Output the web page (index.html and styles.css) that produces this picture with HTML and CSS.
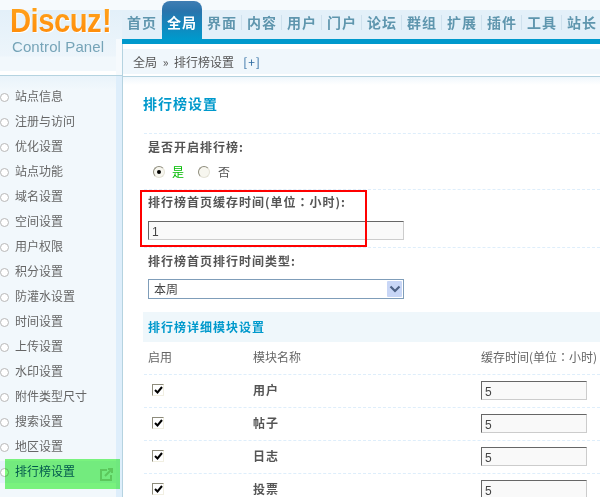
FILE: index.html
```html
<!DOCTYPE html>
<html lang="zh">
<head>
<meta charset="utf-8">
<title>排行榜设置</title>
<link rel="stylesheet" href="styles.css">
</head>
<body>
<div class="page">
  <aside class="side">
    <div class="logo">
      <div class="logo-mark">Discuz<span class="logo-bang">!</span></div>
      <div class="logo-sub">Control Panel</div>
    </div>
    <ul class="menu">
      <li class="menu-item">站点信息</li>
      <li class="menu-item">注册与访问</li>
      <li class="menu-item">优化设置</li>
      <li class="menu-item">站点功能</li>
      <li class="menu-item">域名设置</li>
      <li class="menu-item">空间设置</li>
      <li class="menu-item">用户权限</li>
      <li class="menu-item">积分设置</li>
      <li class="menu-item">防灌水设置</li>
      <li class="menu-item">时间设置</li>
      <li class="menu-item">上传设置</li>
      <li class="menu-item">水印设置</li>
      <li class="menu-item">附件类型尺寸</li>
      <li class="menu-item">搜索设置</li>
      <li class="menu-item">地区设置</li>
      <li class="menu-item is-active">排行榜设置
        <svg class="open-icon" width="13" height="13" viewBox="0 0 13 13" fill="none" stroke="#5cc85c" stroke-width="2"><path d="M7 2H1v10h10V7"/><path d="M5 8l7-7M8 1h4v4"/></svg>
        <span class="active-glow"></span>
      </li>
    </ul>
  </aside>
  <main class="main">
    <nav class="tabs">
      <a class="tab">首页</a><a class="tab is-active">全局</a><a class="tab">界面</a><a class="tab">内容</a><a class="tab">用户</a><a class="tab">门户</a><a class="tab">论坛</a><a class="tab">群组</a><a class="tab">扩展</a><a class="tab">插件</a><a class="tab">工具</a><a class="tab">站长</a>
    </nav>
    <div class="crumbs">全局 » 排行榜设置<span class="crumb-more">[+]</span></div>
    <div class="crumb-fade"></div>
    <section class="content">
      <h1 class="title">排行榜设置</h1>
      <div class="field field-a">
        <div class="label">是否开启排行榜:</div>
        <div class="radios">
          <span class="radio is-on"></span><span class="radio-text is-yes">是</span>
          <span class="radio"></span><span class="radio-text">否</span>
        </div>
      </div>
      <div class="field field-b">
        <div class="label">排行榜首页缓存时间(单位<span class="colon" lang="zh-TW">：</span>小时):</div>
        <input class="text text-wide" value="1">
        <span class="redbox"></span>
      </div>
      <div class="field field-c">
        <div class="label">排行榜首页排行时间类型:</div>
        <div class="select">
          <span class="select-value">本周</span>
          <span class="select-arrow"><svg width="12" height="8" viewBox="0 0 12 8" fill="none" stroke="#4d6185" stroke-width="2.2"><path d="M1.5 1.500L6 6l4.500-4.500"/></svg></span>
        </div>
      </div>
      <h2 class="band">排行榜详细模块设置</h2>
      <div class="grid-row grid-head">
        <span>启用</span><span>模块名称</span><span class="nowrap">缓存时间(单位<span class="colon" lang="zh-TW">：</span>小时)</span>
      </div>
      <div class="grid-row">
        <span class="check"><svg width="9" height="8" viewBox="0 0 9 8" fill="none" stroke="#000" stroke-width="2"><path d="M1 4l2.500 2.500L8 1"/></svg></span>
        <b class="name">用户</b><input class="text text-small" value="5">
      </div>
      <div class="grid-row">
        <span class="check"><svg width="9" height="8" viewBox="0 0 9 8" fill="none" stroke="#000" stroke-width="2"><path d="M1 4l2.500 2.500L8 1"/></svg></span>
        <b class="name">帖子</b><input class="text text-small" value="5">
      </div>
      <div class="grid-row">
        <span class="check"><svg width="9" height="8" viewBox="0 0 9 8" fill="none" stroke="#000" stroke-width="2"><path d="M1 4l2.500 2.500L8 1"/></svg></span>
        <b class="name">日志</b><input class="text text-small" value="5">
      </div>
      <div class="grid-row">
        <span class="check"><svg width="9" height="8" viewBox="0 0 9 8" fill="none" stroke="#000" stroke-width="2"><path d="M1 4l2.500 2.500L8 1"/></svg></span>
        <b class="name">投票</b><input class="text text-small" value="5">
      </div>
    </section>
  </main>
</div>
</body>
</html>
```
FILE: styles.css
```css
* { box-sizing: border-box; }
html, body { margin: 0; padding: 0; background: #fff; }
body {
  width: 600px; height: 497px; overflow: hidden;
  font: 12px/14px "Noto Sans CJK SC", "Liberation Sans", sans-serif;
  color: #555;
}
.page { display: flex; width: 600px; height: 497px; overflow: hidden; }
.colon { font-family: "Noto Sans CJK TC", "Noto Sans CJK SC", sans-serif; }

/* sidebar */
.side { flex: 0 0 122px; width: 122px; min-width: 0; display: flex; flex-direction: column; height: 497px; background: #f2f8fc; }
.logo {
  height: 76px; padding: 3px 0 0 10px; overflow: hidden;
  border-bottom: 1px solid #b5d3e0;
  background:
    linear-gradient(90deg, transparent 116px, #f6fafd 116px) 0 39px no-repeat,
    linear-gradient(#f6fafd 0, #f6fafd 10px, #e3f0f9 10px, #edf5fb 56px, #f2f8fc 57px, #f2f8fc 71px, #fff 71px);
}
.logo-mark {
  display: flex; width: max-content; height: 34px;
  font: 700 34px/34px "Liberation Sans", sans-serif; letter-spacing: -.6px;
  background: linear-gradient(#ffa51e, #ff8a08);
  -webkit-background-clip: text; background-clip: text; color: transparent;
  filter: drop-shadow(1.5px 1.5px 0 #fff);
  transform: scaleX(.86); transform-origin: left center;
}
.logo-bang { margin-left: 1px; }
.logo-sub { margin: 0 0 0 2px; font: 15px/20px "Liberation Sans", sans-serif; letter-spacing: .1px; color: #76a4b8; }
.menu {
  flex: 1; margin: 0; padding: 8px 0 0; list-style: none;
  border-right: 6px solid #deeefb;
  background: linear-gradient(#e9f3fa, #f2f8fc 14px);
}
.menu-item {
  position: relative; height: 25px; padding-left: 15px;
  line-height: 24px; color: #666; white-space: nowrap;
}
.menu-item::before {
  content: ""; position: absolute; left: 0; top: 9px;
  width: 7px; height: 7px; border-radius: 50%;
  border: 1px solid #b8b8b8; background: #fff;
}
.menu-item.is-active { color: #005a96; background: linear-gradient(#f2f8fc 2px, #e6f1fb 2px, #e6f1fb 24px, #f2f8fc 24px); }
.open-icon { position: absolute; left: 100px; top: 9px; z-index: 2; }
.active-glow {
  position: absolute; left: 5px; top: 0; width: 115px; height: 30px;
  background: rgba(96, 247, 96, .8); mix-blend-mode: multiply;
}

/* main */
.main { flex: 1; min-width: 0; height: 497px; }
.tabs {
  display: flex; height: 44px; overflow: hidden;
  border-bottom: 5px solid #0099cc;
  background: linear-gradient(#f6fafd 0, #f6fafd 10px, #e3f0f9 10px);
}
.tab {
  position: relative; flex: 0 0 40px; padding-top: 14px; text-align: center;
  font: 700 14px/17px "Noto Sans CJK SC", sans-serif; letter-spacing: 1px; color: #5f96ae;
}
.tab::after {
  content: ""; position: absolute; right: 0; top: 15px;
  width: 1px; height: 15px; background: #cfe1ed;
}
.tab.is-active {
  margin-top: 1px; padding-top: 13px; color: #fff;
  border-radius: 8px 8px 0 0;
  background: linear-gradient(#3f7db3 0, #2a74ac 10px, #0099cc 100%);
}
.tab.is-active::after { display: none; }
.crumbs {
  height: 33px; margin-top: 0; padding: 5px 0 2px 10px;
  border-left: 1px solid #b5d3e0;
  border-bottom: 1px solid #b5d3e0;
  background: linear-gradient(#fff 5px, #f0f7fc 5px, #f0f7fc 30px, #fff 30px);
  line-height: 25px; color: #555; white-space: nowrap; word-spacing: 3px;
}
.crumb-more { margin-left: 9px; color: #2b6aa0; letter-spacing: 1px; }
.crumb-fade { height: 8px; border-left: 1px solid #b5d3e0; background: linear-gradient(#f0f7fc, #fff); }

.content { position: relative; height: 412px; padding-left: 21px; border-left: 1px solid #b5d3e0; overflow: hidden; }
.title { margin: 0 0 0 -1px; height: 48px; padding: 10px 0 0; font: 700 14px/16px "Noto Sans CJK SC", sans-serif; letter-spacing: 1px; color: #0099cc; }
.field { position: relative; border-top: 1px dashed #deeefb; padding-left: 4px; }
.field-a { height: 56px; padding-top: 6px; }
.field-b { height: 58px; padding-top: 5px; }
.field-c { height: 65px; padding-top: 6px; }
.label { font-weight: 700; letter-spacing: 1px; color: #555; white-space: nowrap; }
.radios { display: flex; align-items: center; height: 16px; margin-top: 10px; padding-left: 5px; }
.radio {
  position: relative; width: 12px; height: 12px; border-radius: 50%;
  border: 1px solid #8e8c7c; border-right-color: #e4e2d6; border-bottom-color: #e4e2d6;
  background: #f7f6ef;
}
.radio.is-on::after {
  content: ""; position: absolute; left: 3px; top: 3px;
  width: 4px; height: 4px; border-radius: 50%; background: #000;
}
.radio-text { margin: 0 0 0 8px; color: #555; }
.radio-text.is-yes { margin: 0 14px 0 7px; color: #00bb00; }
.text {
  display: block; height: 19px; padding: 2px 3px 0; margin: 0;
  font: 12px/15px "Liberation Sans", sans-serif; color: #444;
  background: #f9f9f9; outline: 0; border-radius: 0;
  border: 1px solid #ccc; border-top-color: #666; border-left-color: #666;
}
.text-wide { width: 256px; margin-top: 12px; }
.text-small { width: 106px; }
.redbox {
  position: absolute; z-index: 2; left: -4px; top: 0; width: 227px; height: 57px;
  border: 2px solid #f00;
}
.select {
  display: flex; justify-content: space-between; width: 256px; height: 20px; margin-top: 11px;
  border: 1px solid #7f9db9; background: #fff; padding: 1px;
}
.select-value { padding-left: 4px; line-height: 16px; color: #444; }
.select-arrow {
  display: flex; align-items: center; justify-content: center;
  width: 15px; height: 16px; border-radius: 1px; background: #c8d6f6;
}
.band {
  height: 30px; margin: 0 0 0 -1px; padding-left: 5px;
  font: 700 12px/29px "Noto Sans CJK SC", sans-serif; letter-spacing: 1px; color: #0099cc;
  background: #eff7fb;
}
.grid-row {
  display: grid; grid-template-columns: 105px 228px 1fr; align-items: start;
  height: 33px; padding: 6px 0 0 4px; border-top: 1px dashed #deeefb; color: #666;
}
.grid-head { height: 32px; padding: 0 0 2px 4px; align-items: center; border-top: 0; }
.nowrap { white-space: nowrap; }
.check {
  display: flex; align-items: center; justify-content: center;
  width: 12px; height: 12px; margin: 3px 0 0 4px;
  border: 1px solid #8e8c7c; border-right-color: #f1efe2; border-bottom-color: #f1efe2;
  background: #fff;
}
.name { line-height: 18px; letter-spacing: 1px; color: #555; }
```
